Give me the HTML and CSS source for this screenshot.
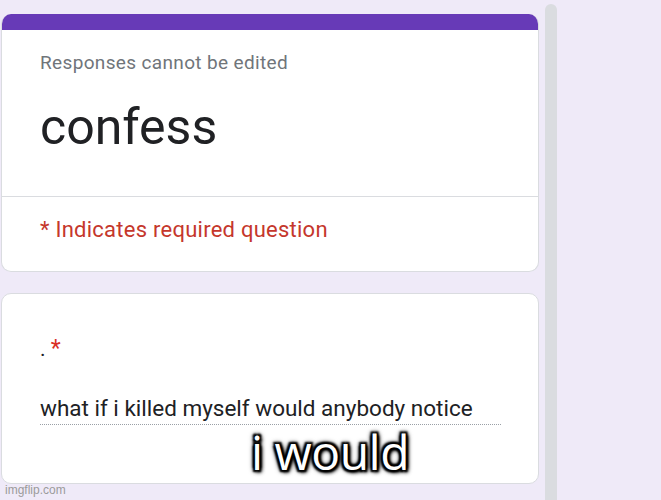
FILE: index.html
```html
<!DOCTYPE html>
<html>
<head>
<meta charset="utf-8">
<link rel="stylesheet" href="styles.css">
</head>
<body>
<div class="page">
  <div class="column">
    <div class="card head-card">
      <div class="accent"></div>
      <div class="head-main">
        <div class="note">Responses cannot be edited</div>
        <div class="title">confess</div>
      </div>
      <div class="head-foot">
        <span class="req">* Indicates required question</span>
      </div>
    </div>
    <div class="card q-card">
      <div class="q-label"><span class="dot">.</span> <span class="star">*</span></div>
      <div class="answer">what if i killed myself would anybody notice</div>
    </div>
  </div>
  <div class="scrollbar"></div>
  <div class="caption">i would</div>
  <div class="watermark">imgflip.com</div>
</div>
</body>
</html>
```
FILE: styles.css
```css
html, body {
  margin: 0;
  padding: 0;
  background: #efeaf8;
}
.page {
  position: relative;
  width: 661px;
  height: 500px;
  overflow: hidden;
  display: flex;
  align-items: flex-start;
  font-family: Roboto, "Liberation Sans", sans-serif;
}
.column {
  margin-top: 14px;
  margin-left: 1px;
  width: 538px;
  display: flex;
  flex-direction: column;
  gap: 21px;
}
.card {
  background: #fff;
  border: 1px solid #dadce0;
  border-radius: 10px;
  box-sizing: border-box;
  overflow: hidden;
}
.head-card {
  height: 258px;
  border-top: none;
  display: flex;
  flex-direction: column;
}
.accent {
  height: 16px;
  background: #673ab7;
  margin: 0 -1px;
}
.head-main {
  height: 167px;
  padding: 22px 38px 0;
  box-sizing: border-box;
  border-bottom: 1px solid #dadce0;
}
.note {
  font-size: 19px;
  color: #70757a;
  letter-spacing: 0.35px;
  line-height: 22px;
}
.title {
  margin-top: 25px;
  font-size: 50px;
  color: #202124;
  line-height: 56px;
}
.head-foot {
  padding: 20px 38px 0;
}
.req {
  font-size: 22px;
  color: #c5372c;
  letter-spacing: 0.25px;
  line-height: 26px;
}
.q-card {
  height: 191px;
  padding: 42px 38px 0;
}
.q-label {
  font-size: 21px;
  line-height: 26px;
  color: #202124;
}
.star {
  color: #d93025;
  font-size: 23px;
}
.answer {
  margin-top: 33px;
  width: 461px;
  font-size: 22.5px;
  color: #202124;
  line-height: 27px;
  padding-bottom: 2px;
  border-bottom: 1px dotted #9aa0a6;
}
.scrollbar {
  margin-left: 6px;
  margin-top: 4px;
  width: 12px;
  height: 520px;
  background: #dadce0;
  border-radius: 6px 6px 0 0;
}
.caption {
  position: absolute;
  left: 251px;
  top: 423px;
  font-family: "Open Sans", "DejaVu Sans", sans-serif;
  font-size: 48px;
  font-weight: 500;
  line-height: 58px;
  color: #fff;
  letter-spacing: -0.5px;
  text-shadow: 0 0 2px #000, 0 0 3px #000, 0 0 5px #000, 0 0 6px #000, 2px 2px 2px #000, -2px -2px 2px #000, 2px -2px 2px #000, -2px 2px 2px #000, 2px 2px 4px #000;
}
.watermark {
  position: absolute;
  left: 5px;
  top: 483px;
  font-family: "Liberation Sans", Arial, sans-serif;
  font-size: 12px;
  color: #9b9b9b;
}
```
